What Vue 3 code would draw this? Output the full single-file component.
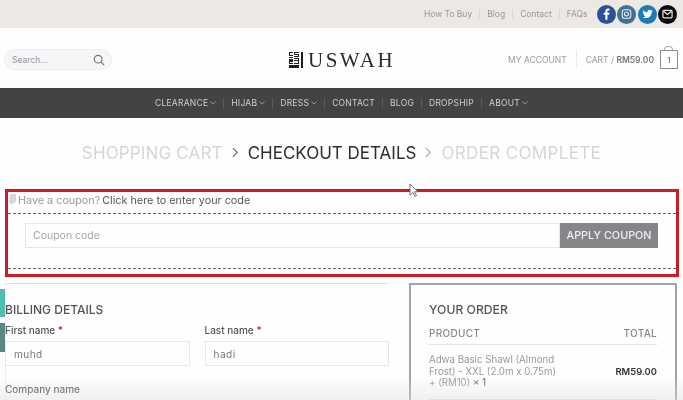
<script setup>
const topLinks = ['How To Buy', 'Blog', 'Contact', 'FAQs']
const navItems = [
  { label: 'CLEARANCE', caret: true },
  { label: 'HIJAB', caret: true },
  { label: 'DRESS', caret: true },
  { label: 'CONTACT', caret: false },
  { label: 'BLOG', caret: false },
  { label: 'DROPSHIP', caret: false },
  { label: 'ABOUT', caret: true }
]
</script>

<template>
  <div class="page">
    <div class="soft">
      <div class="topbar">
        <template v-for="(link, i) in topLinks" :key="link">
          <span class="toplink">{{ link }}</span>
          <span v-if="i < topLinks.length - 1" class="topsep"></span>
        </template>
        <div class="socials">
          <span class="social fb">
            <svg viewBox="0 0 20 20" width="20" height="20"><path d="M11 16V10.700h1.900l.3-2.100H11V7.300c0-.6.2-1 1-1h1.200V4.400c-.4 0-1-.1-1.600-.1-1.700 0-2.800 1-2.800 2.800v1.500H7v2.100h1.800V16z" fill="#fff"/></svg>
          </span>
          <span class="social ig">
            <svg viewBox="0 0 20 20" width="20" height="20" fill="none" stroke="#e8eef2" stroke-width="1.100"><rect x="5.500" y="5.500" width="9" height="9" rx="2.400"/><circle cx="10" cy="10" r="2.100"/></svg>
          </span>
          <span class="social tw">
            <svg viewBox="0 0 20 20" width="20" height="20"><path d="M15.500 6.600c-.4.2-.8.3-1.300.4.5-.3.8-.7 1-1.200-.4.3-.9.4-1.400.5a2.200 2.200 0 0 0-3.800 2C8.200 8.200 6.600 7.400 5.500 6c-.6 1-.3 2.300.7 3-.4 0-.7-.1-1-.3 0 1.100.8 2 1.800 2.200-.3.100-.7.100-1 0 .3.900 1.100 1.500 2.100 1.500-.9.700-2.100 1.100-3.300.9 1 .6 2.100 1 3.300 1 4.100 0 6.400-3.400 6.300-6.500.4-.3.800-.7 1.100-1.200z" fill="#fff"/></svg>
          </span>
          <span class="social em">
            <svg viewBox="0 0 20 20" width="20" height="20" fill="none" stroke="#e8e8e8" stroke-width="1.300"><rect x="5.200" y="6.200" width="9.600" height="7.800" rx="1.200"/><path d="M5.800 7.200l4.200 3.300 4.200-3.300"/></svg>
          </span>
        </div>
      </div>

      <header class="header">
        <div class="search">
          <span class="search-text">Search...</span>
          <svg viewBox="0 0 14 14" width="12" height="12" fill="none" stroke="#777" stroke-width="1.400"><circle cx="6" cy="6" r="4.500"/><path d="M9.500 9.500L13 13"/></svg>
        </div>
        <div class="logo">
          <svg class="kufic" viewBox="0 0 15 16" width="15" height="16" fill="#1f1f1f"><path d="M0 0h4v1H1v2h3v1H0zM0 5h4v1H0zM0 7h4v3H1v1h3v1H0zM0 13h10v3H0zM5 0h5v1H6v1h4v3H5V4h4V3H5zM5 6h5v6H5v-1h4V9H5V8h4V7H5zM12 0h2v16h-2z"/></svg>
          <span>USWAH</span>
        </div>
        <div class="account">
          <span class="acct">MY ACCOUNT</span>
          <span class="acct-sep"></span>
          <span class="cart">CART / <b>RM59.00</b></span>
          <span class="bag"><span class="handle"></span>1</span>
        </div>
      </header>

      <nav class="nav">
        <template v-for="(item, i) in navItems" :key="item.label">
          <span class="navitem">
            {{ item.label }}
            <svg v-if="item.caret" viewBox="0 0 8 5" width="6" height="4" fill="none" stroke="#bbb" stroke-width="1"><path d="M.5.5L4 4 7.500.5"/></svg>
          </span>
          <span v-if="i < navItems.length - 1" class="navsep"></span>
        </template>
      </nav>

      <div class="steps">
        <span class="step-off">SHOPPING CART</span>
        <svg viewBox="0 0 8 12" width="7" height="11" fill="none" stroke="#666" stroke-width="1.300"><path d="M1 1l5 5-5 5"/></svg>
        <span class="step-on">CHECKOUT DETAILS</span>
        <svg viewBox="0 0 8 12" width="7" height="11" fill="none" stroke="#aaa" stroke-width="1.300"><path d="M1 1l5 5-5 5"/></svg>
        <span class="step-off step-last">ORDER COMPLETE</span>
      </div>

      <section class="coupon">
        <div class="coupon-head">
          <svg class="tag" viewBox="0 0 8 12" width="8" height="12"><path d="M2 0h6v7l-4 4-3-3z" fill="#d8d8d8"/></svg>
          <span class="muted">Have a coupon?</span>
          <span class="link">Click here to enter your code</span>
        </div>
        <div class="coupon-body">
          <div class="coupon-input">Coupon code</div>
          <div class="coupon-btn">APPLY COUPON</div>
        </div>
      </section>

      <div class="columns">
        <div class="billing">
          <h3 class="title">BILLING DETAILS</h3>
          <div class="fields">
            <div class="field">
              <div class="label">First name <i>*</i></div>
              <div class="input">muhd</div>
            </div>
            <div class="field">
              <div class="label">Last name <i>*</i></div>
              <div class="input">hadi</div>
            </div>
          </div>
          <div class="label company">Company name</div>
        </div>
        <aside class="order">
          <h3 class="title">YOUR ORDER</h3>
          <div class="order-head"><span>PRODUCT</span><span>TOTAL</span></div>
          <div class="order-row">
            <div class="order-name">Adwa Basic Shawl (Almond Frost) - XXL (2.0m x 0.75m) + (RM10) <b>× 1</b></div>
            <div class="order-price">RM59.00</div>
          </div>
        </aside>
      </div>

      <span class="tab teal"></span>
      <span class="tab slate"></span>
      <svg class="cursor" viewBox="0 0 10 15" width="10" height="15"><path d="M1 1v11l3-2.500 2 4 1.500-.8-2-3.900H9z" fill="#fff" stroke="#555" stroke-width=".8"/></svg>
    </div>
    <div class="fade"></div>
  </div>
</template>

<style>
html, body { margin: 0; background: #fff; }
</style>

<style scoped>
.page {
  position: relative;
  width: 683px;
  height: 400px;
  overflow: hidden;
  background: #fefefe;
  font-family: Inter, "Open Sans", sans-serif;
  color: #555;
}
.soft { height: 400px; filter: blur(.35px); }
.topbar {
  height: 28px;
  background: #ece8e4;
  display: flex;
  align-items: center;
  justify-content: flex-end;
  padding-right: 6px;
  box-sizing: border-box;
}
.toplink { font-size: 8.500px; color: #9a9895; }
.topsep { width: 1px; height: 9px; background: #dcd8d4; margin: 0 7px; }
.socials { display: flex; gap: 1.500px; margin-left: 9px; }
.social { width: 19px; height: 19px; border-radius: 50%; display: flex; align-items: center; justify-content: center; }
.social svg { display: block; }
.fb { background: #2a5297; }
.ig { background: #3f7191; }
.tw { background: #1c7cb8; }
.em { background: #0b0b0d; }

.header {
  height: 60px;
  display: flex;
  align-items: center;
  position: relative;
  padding: 3px 5px 0 4px;
  box-sizing: border-box;
}
.search {
  width: 108px;
  height: 21px;
  box-sizing: border-box;
  border: 1px solid #ececec;
  border-radius: 11px;
  background: #f6f5f7;
  display: flex;
  align-items: center;
  justify-content: space-between;
  padding: 0 6px 0 7px;
}
.search-text { font-size: 8.500px; color: #999; }
.logo {
  display: flex;
  align-items: center;
  gap: 4px;
  margin-left: 177px;
  font-family: "Liberation Serif", serif;
  font-size: 21px;
  line-height: 22px;
  letter-spacing: 2.500px;
  color: #2a2a2a;
}
.kufic { display: block; }
.account { margin-left: auto; display: flex; align-items: center; }
.acct, .cart { font-size: 8.500px; color: #9b9b9b; }
.cart b { font-weight: 600; color: #777; }
.acct-sep { width: 1px; height: 19px; background: #ececec; margin: 0 9px; }
.bag {
  position: relative;
  width: 18px;
  height: 19px;
  box-sizing: border-box;
  border: 1.500px solid #8c8c8c;
  margin-left: 6px;
  font-size: 8px;
  display: flex;
  align-items: center;
  justify-content: center;
  color: #555;
}
.handle {
  position: absolute;
  top: -5px;
  left: 3px;
  width: 9px;
  height: 4px;
  border: 1px solid #aaa;
  border-bottom: 0;
  border-radius: 4px 4px 0 0;
  box-sizing: border-box;
}

.nav {
  height: 30px;
  background: #444245;
  display: flex;
  align-items: center;
  justify-content: center;
  box-sizing: border-box;
}
.navitem { font-size: 8.500px; letter-spacing: .25px; color: #cfcfcf; display: flex; align-items: center; gap: 2px; }
.navsep { width: 1px; height: 10px; background: #5c5a5d; margin: 0 7px; }

.steps {
  height: 71px;
  display: flex;
  align-items: center;
  justify-content: center;
  gap: 9px;
  font-size: 17px;
  letter-spacing: .15px;
  padding-bottom: 2px;
  box-sizing: border-box;
}
.step-off { color: #d6d6d8; }
.step-on { color: #2d2d2f; letter-spacing: 0; }
.step-last { letter-spacing: .35px; }

.coupon {
  margin: 0 4px 0 5px;
  height: 88px;
  box-sizing: border-box;
  border: 3px solid #cc1b24;
}
.coupon-head {
  height: 22px;
  display: flex;
  align-items: center;
  gap: 2px;
  padding: 0 0 5px 0;
  font-size: 10.800px;
  border-bottom: 1px dashed #666;
  box-sizing: border-box;
}
.tag { flex: none; }
.muted { color: #999; }
.link { color: #555; }
.coupon-body {
  height: 55px;
  border-bottom: 1px dashed #666;
  padding: 9px 18px 0 17px;
  box-sizing: border-box;
  display: flex;
  align-items: flex-start;
}
.coupon-input {
  flex: 1;
  height: 25px;
  box-sizing: border-box;
  border: 1px solid #e6e6e6;
  display: flex;
  align-items: center;
  padding-left: 7px;
  font-size: 10.500px;
  color: #a5a5a5;
}
.coupon-btn {
  width: 98px;
  height: 25px;
  background: #87858a;
  color: #eee;
  font-size: 10.800px;
  font-weight: 500;
  display: flex;
  align-items: center;
  justify-content: center;
}

.columns {
  display: flex;
  margin-top: 6px;
  padding: 0 6px 0 5px;
  gap: 20px;
}
.billing {
  width: 384px;
  height: 120px;
  flex: none;
  border-top: 1px solid #dde2e8;
  box-shadow: inset 1px 0 #eef0f3;
  padding-top: 18px;
  box-sizing: border-box;
}
.title { margin: 0; font-size: 12px; line-height: 15px; font-weight: 500; color: #555; }
.fields { display: flex; gap: 15px; margin-top: 6px; }
.field { flex: 1; }
.label { font-size: 10px; line-height: 14px; color: #555; font-weight: 500; }
.label i { color: #c0182a; font-style: normal; }
.input {
  margin-top: 4px;
  height: 25px;
  box-sizing: border-box;
  border: 1px solid #e6e6e6;
  display: flex;
  align-items: center;
  padding-left: 8px;
  font-size: 10px;
  letter-spacing: .5px;
  color: #777;
}
.company { margin-top: 16px; }
.order {
  flex: 1;
  height: 130px;
  border: 2px solid #a2a4a6;
  box-sizing: border-box;
  padding: 17px 18px 0;
}
.order .title { font-size: 12.200px; }
.order-head {
  display: flex;
  justify-content: space-between;
  margin-top: 10px;
  height: 17px;
  font-size: 10px;
  font-weight: 500;
  color: #888;
  letter-spacing: .3px;
  border-bottom: 1px solid #e4e4e4;
  align-items: flex-start;
}
.order-row {
  display: flex;
  align-items: center;
  justify-content: space-between;
  padding: 9px 0 10px;
  border-bottom: 1px solid #e4e4e4;
}
.order-name { width: 134px; font-size: 9.700px; line-height: 11.500px; color: #999; }
.order-name b { display: inline-block; font-weight: 500; color: #777; }
.order-price { font-size: 9.400px; font-weight: 600; color: #333; }

.tab { position: absolute; left: 0; width: 5px; }
.teal { top: 289px; height: 28px; background: #4dbdb5; }
.slate { top: 323px; height: 29px; background: #5b8587; }
.cursor { position: absolute; left: 409px; top: 183px; }
.fade {
  position: absolute;
  left: 0;
  right: 0;
  bottom: 0;
  height: 25px;
  background: linear-gradient(rgba(225,225,225,0), rgba(225,225,225,.45));
  pointer-events: none;
}
</style>
